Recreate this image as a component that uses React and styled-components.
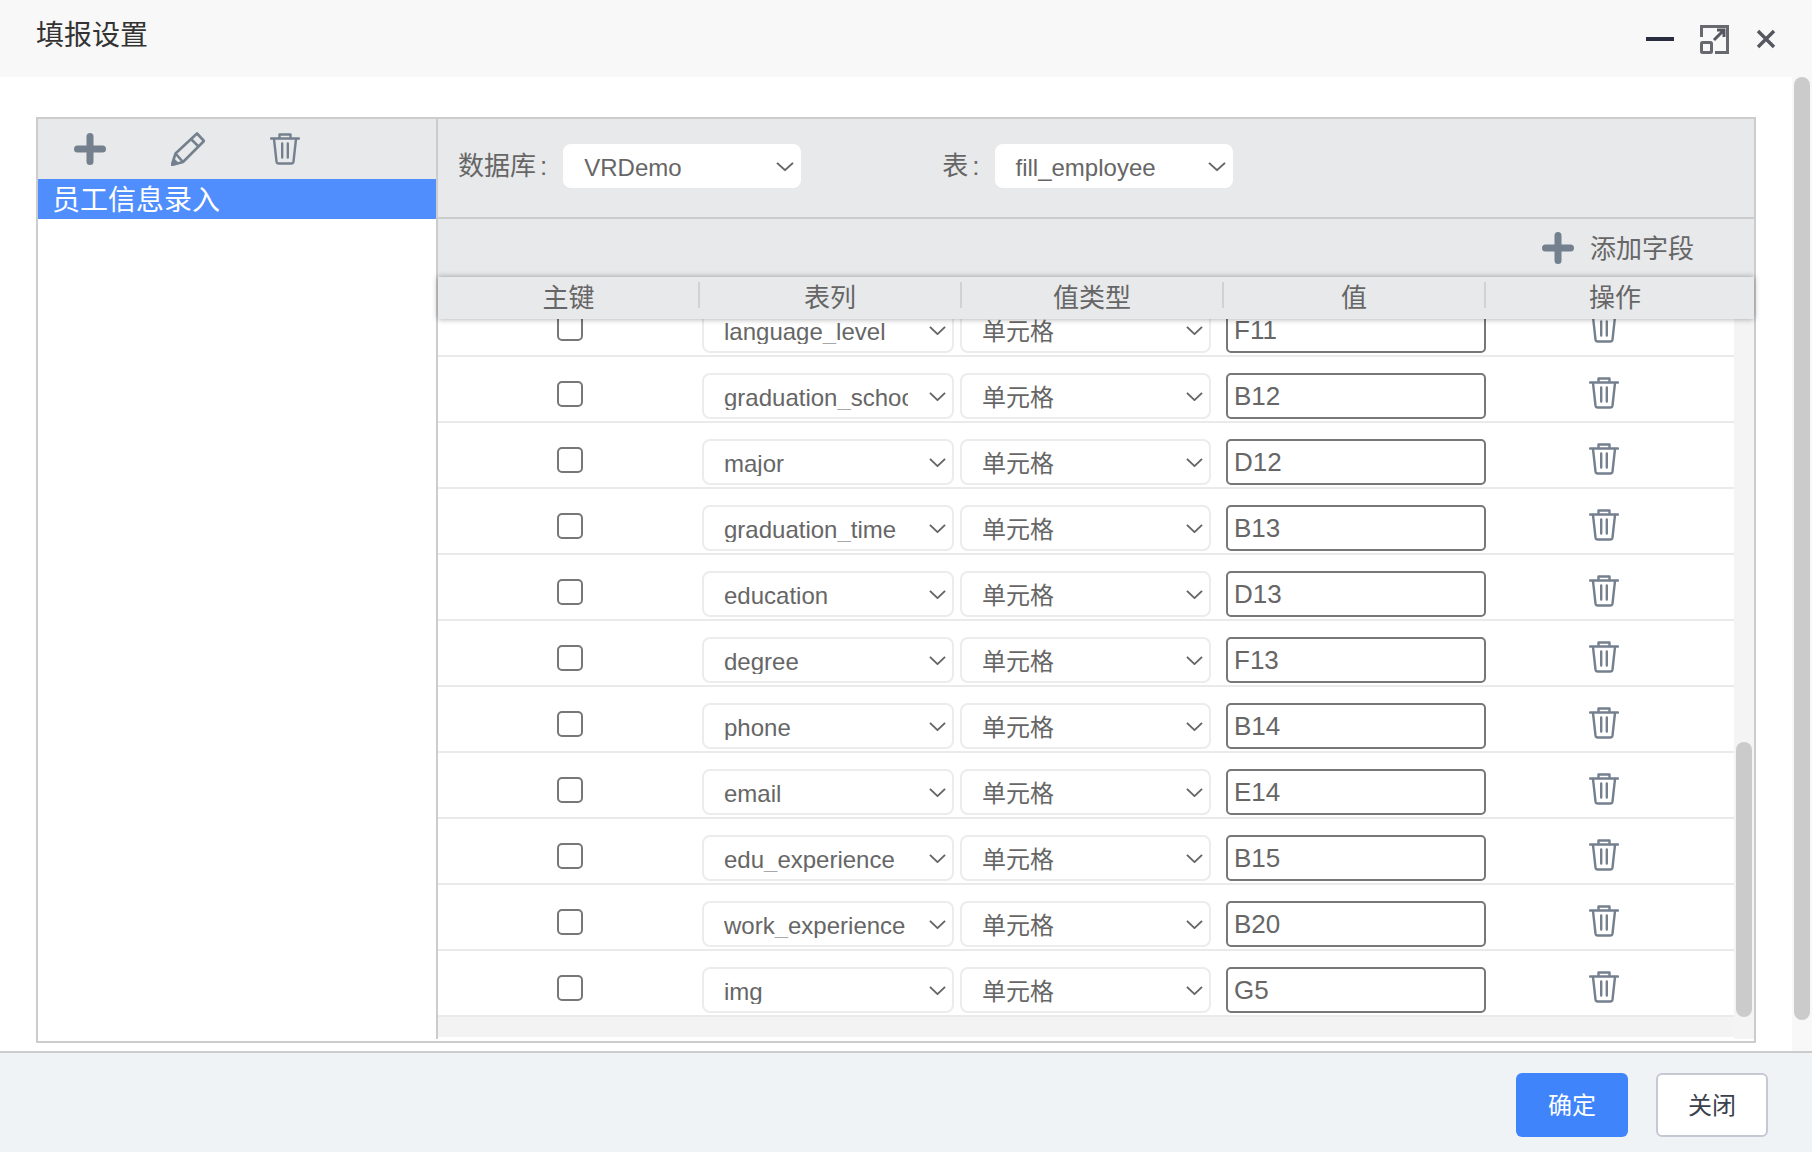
import React from "react";
import styled, { createGlobalStyle } from "styled-components";

const GlobalStyle = createGlobalStyle`
  html, body {
    margin: 0;
    padding: 0;
    background: #fff;
    overflow: hidden;
    font-family: "Liberation Sans", "Noto Sans CJK SC", sans-serif;
  }
  * { box-sizing: border-box; }
`;

const Dialog = styled.div`
  display: flex;
  flex-direction: column;
  width: 1812px;
  height: 1152px;
  background: #fff;
`;

const TitleBar = styled.div`
  display: flex;
  flex: 0 0 77px;
  align-items: center;
  justify-content: space-between;
  padding: 0 36px;
  background: #f8f8f8;
`;

const Title = styled.div`
  margin-top: -5px;
  font-size: 28px;
  line-height: 36px;
  color: #333;
`;

const WindowControls = styled.div`
  display: flex;
  align-items: center;
  gap: 26px;
`;

const Content = styled.div`
  display: flex;
  flex: 1;
  min-height: 0;
`;

const Main = styled.div`
  flex: 1;
  min-width: 0;
  padding: 40px 36px 8px;
`;

const Frame = styled.div`
  display: flex;
  height: 100%;
  padding-bottom: 2px;
  border: 2px solid #ccc;
`;

const LeftPanel = styled.div`
  flex: 0 0 400px;
  border-right: 2px solid #ccc;
`;

const LeftToolbar = styled.div`
  display: flex;
  align-items: center;
  gap: 65px;
  height: 60px;
  padding-left: 36px;
  background: #e8e9eb;
  color: #74808e;
`;

const ListItem = styled.div`
  height: 40px;
  padding-left: 14px;
  font-size: 28px;
  line-height: 44px;
  color: #fff;
  background: #4f8efc;
`;

const RightPanel = styled.div`
  display: flex;
  flex: 1;
  flex-direction: column;
  min-width: 0;
`;

const SourceBar = styled.div`
  display: flex;
  flex: 0 0 100px;
  align-items: flex-start;
  padding: 25px 0 0 20px;
  background: #e8e9eb;
  border-bottom: 2px solid #ccc;
`;

const SourceLabel = styled.div`
  margin-left: ${(p) => p.$offset || 0}px;
  font-size: 26px;
  line-height: 44px;
  color: #666;
`;

const Colon = styled.span`
  margin: 0 ${(p) => p.$after}px 0 4px;
`;

const SourceSelect = styled.div`
  display: flex;
  align-items: center;
  justify-content: space-between;
  width: 238px;
  height: 44px;
  padding: 0 7px 0 21px;
  font-size: 24px;
  color: #666;
  background: #fff;
  border-radius: 8px;
`;

const SourceValue = styled.span`
  margin-top: 4px;
`;

const SourceChevron = styled.span`
  display: flex;
  color: #666;
`;

const AddRow = styled.div`
  display: flex;
  flex: 0 0 58px;
  align-items: center;
  justify-content: flex-end;
  gap: 16px;
  padding-right: 60px;
  font-size: 26px;
  color: #666;
  background: #e8e9eb;
`;

const AddIcon = styled.span`
  display: flex;
  color: #74808e;
`;

const AddText = styled.span`
  margin-top: -4px;
`;

const TableHead = styled.div`
  position: relative;
  z-index: 1;
  display: grid;
  flex: 0 0 40px;
  grid-template-columns: 261px 262px 262px 262px 1fr;
  background: #e8e9eb;
  box-shadow: 0 0 6px rgba(0, 0, 0, 0.36);
`;

const HeadCell = styled.div`
  position: relative;
  font-size: 26px;
  line-height: 42px;
  text-align: center;
  color: #666;

  &:not(:last-child)::after {
    content: "";
    position: absolute;
    top: 5px;
    right: -1px;
    width: 2px;
    height: 26px;
    background: #d2d2d2;
  }

  &:last-child {
    padding-right: 9px;
  }
`;

const TableBody = styled.div`
  display: flex;
  flex: 1;
  min-height: 0;
`;

const RowsArea = styled.div`
  display: flex;
  flex: 1;
  flex-direction: column;
  justify-content: flex-end;
  min-width: 0;
  padding-bottom: 2px;
  overflow: hidden;
`;

const Row = styled.div`
  display: flex;
  flex: 0 0 66px;
  align-items: flex-start;
  padding-top: 16px;
  border-bottom: 2px solid #eaeaea;
`;

const BottomStrip = styled.div`
  flex: 0 0 20px;
  background: #f3f3f3;
`;

const CheckCell = styled.div`
  display: flex;
  flex: 0 0 264px;
  justify-content: center;
  padding-top: 8px;
`;

const CheckBox = styled.input.attrs({ type: "checkbox" })`
  width: 26px;
  height: 26px;
  margin: 0;
  appearance: none;
  background: #fff;
  border: 2px solid #777;
  border-radius: 5px;
`;

const CellSelect = styled.div`
  display: flex;
  flex: 0 0 ${(p) => p.$width}px;
  align-items: flex-start;
  justify-content: space-between;
  height: 46px;
  margin-left: ${(p) => p.$gap || 0}px;
  padding: 10px 6px 0 20px;
  background: #fff;
  border: 2px solid #ececec;
  border-radius: 8px;
`;

const SelectValue = styled.div`
  width: 184px;
  height: 25px;
  overflow: hidden;
  font-size: 24px;
  line-height: 26px;
  white-space: nowrap;
  color: #666;
`;

const ChevronSlot = styled.span`
  display: flex;
  margin-top: 7px;
  color: #666;
`;

const ValueBox = styled.div`
  flex: 0 0 260px;
  height: 46px;
  margin-left: 15px;
  padding-left: 6px;
  font-size: 26px;
  line-height: 42px;
  color: #666;
  background: #fff;
  border: 2px solid #777;
  border-radius: 5px;
`;

const TrashCell = styled.div`
  display: flex;
  flex: 1;
  justify-content: center;
  padding: 4px 13px 0 0;
  color: #74808e;
`;

const ScrollTrack = styled.div`
  display: flex;
  flex: 0 0 20px;
  flex-direction: column;
  justify-content: flex-end;
  padding: 0 2px 22px;
  background: ${(p) => p.$color};
`;

const ScrollThumb = styled.div`
  flex: 0 0 ${(p) => p.$height}px;
  background: #cbcbcb;
  border-radius: 8px;
`;

const PageTrack = styled(ScrollTrack)`
  justify-content: flex-start;
  padding: 0 2px;
`;

const Footer = styled.div`
  display: flex;
  flex: 0 0 101px;
  align-items: flex-start;
  justify-content: flex-end;
  gap: 28px;
  padding: 20px 44px 0 0;
  background: #eff3f6;
  border-top: 2px solid #ccc;
`;

const Button = styled.button`
  width: 112px;
  height: 64px;
  padding: 0 0 4px;
  font-family: inherit;
  font-size: 24px;
  color: ${(p) => (p.$primary ? "#fff" : "#3a404c")};
  background: ${(p) => (p.$primary ? "#3f84fb" : "#fff")};
  border: ${(p) => (p.$primary ? "none" : "2px solid #c4c9d3")};
  border-radius: 6px;
`;

const PlusIcon = () => (
  <svg width="32" height="32" viewBox="0 0 32 32" fill="none" stroke="currentColor" strokeWidth="7" strokeLinecap="round">
    <path d="M16 3.5v25M3.5 16h25" />
  </svg>
);

const PencilIcon = () => (
  <svg width="34" height="34" viewBox="0 0 34 34" fill="none" stroke="currentColor" strokeWidth="2.6" strokeLinejoin="round">
    <path d="M.8 33L4.500 21.500 26 1.500 33 9 12 30 .8 33z" />
    <path d="M4.500 21.500l7.500 8.500M20 7l7.500 7.500" />
    <path d="M.8 33l2-7 5 5z" fill="currentColor" stroke="none" />
  </svg>
);

const TrashIcon = () => (
  <svg width="30" height="32" viewBox="0 0 30 32" fill="none" stroke="currentColor" strokeWidth="2.4" strokeLinecap="round" strokeLinejoin="round">
    <path d="M1 5.500h28" />
    <path d="M9.500 5V1.500h11V5" />
    <path d="M4 6l2.500 22.500q.3 2 2.300 2h12.400q2 0 2.300-2L26 6" />
    <path d="M12.200 10.500v14M17.800 10.500v14" />
  </svg>
);

const MinimizeIcon = () => (
  <svg width="28" height="4" viewBox="0 0 28 4">
    <rect width="28" height="4" fill="#2a2d3f" />
  </svg>
);

const MaximizeIcon = () => (
  <svg width="30" height="30" viewBox="1 0 30 30" fill="none" stroke="#68686f" strokeWidth="3">
    <path d="M2.500 13V2.500h26v26H16" />
    <rect x="2.500" y="18.500" width="10" height="10" rx="1" />
    <path d="M15 16L25 6M18 6h7v7" stroke="#55565f" />
  </svg>
);

const CloseIcon = () => (
  <svg width="20" height="20" viewBox="0 0 20 20" fill="none" stroke="#55565f" strokeWidth="3.400">
    <path d="M2 2l16 16M18 2L2 18" />
  </svg>
);

const Chevron = ({ width = 17, height = 9 }) => (
  <svg width={width} height={height} viewBox="0 0 18 10" preserveAspectRatio="none" fill="none" stroke="currentColor" strokeWidth="2">
    <path d="M1 1l8 8 8-8" />
  </svg>
);

const columns = ["主键", "表列", "值类型", "值", "操作"];

const fields = [
  ["language_level", "F11"],
  ["graduation_school", "B12"],
  ["major", "D12"],
  ["graduation_time", "B13"],
  ["education", "D13"],
  ["degree", "F13"],
  ["phone", "B14"],
  ["email", "E14"],
  ["edu_experience", "B15"],
  ["work_experience", "B20"],
  ["img", "G5"],
];

export default function App() {
  return (
    <Dialog>
      <GlobalStyle />
      <TitleBar>
        <Title>填报设置</Title>
        <WindowControls>
          <MinimizeIcon />
          <MaximizeIcon />
          <CloseIcon />
        </WindowControls>
      </TitleBar>
      <Content>
        <Main>
          <Frame>
            <LeftPanel>
              <LeftToolbar>
                <PlusIcon />
                <PencilIcon />
                <TrashIcon />
              </LeftToolbar>
              <ListItem>员工信息录入</ListItem>
            </LeftPanel>
            <RightPanel>
              <SourceBar>
                <SourceLabel>
                  数据库<Colon $after={16}>:</Colon>
                </SourceLabel>
                <SourceSelect>
                  <SourceValue>VRDemo</SourceValue>
                  <SourceChevron>
                    <Chevron width={18} />
                  </SourceChevron>
                </SourceSelect>
                <SourceLabel $offset={141}>
                  表<Colon $after={15}>:</Colon>
                </SourceLabel>
                <SourceSelect>
                  <SourceValue>fill_employee</SourceValue>
                  <SourceChevron>
                    <Chevron width={18} />
                  </SourceChevron>
                </SourceSelect>
              </SourceBar>
              <AddRow>
                <AddIcon>
                  <PlusIcon />
                </AddIcon>
                <AddText>添加字段</AddText>
              </AddRow>
              <TableHead>
                {columns.map((name) => (
                  <HeadCell key={name}>{name}</HeadCell>
                ))}
              </TableHead>
              <TableBody>
                <RowsArea>
                  {fields.map(([name, cell]) => (
                    <Row key={name}>
                      <CheckCell>
                        <CheckBox readOnly />
                      </CheckCell>
                      <CellSelect $width={252}>
                        <SelectValue>{name}</SelectValue>
                        <ChevronSlot>
                          <Chevron />
                        </ChevronSlot>
                      </CellSelect>
                      <CellSelect $width={251} $gap={6}>
                        <SelectValue>单元格</SelectValue>
                        <ChevronSlot>
                          <Chevron />
                        </ChevronSlot>
                      </CellSelect>
                      <ValueBox>{cell}</ValueBox>
                      <TrashCell>
                        <TrashIcon />
                      </TrashCell>
                    </Row>
                  ))}
                  <BottomStrip />
                </RowsArea>
                <ScrollTrack $color="#f4f4f4">
                  <ScrollThumb $height={275} />
                </ScrollTrack>
              </TableBody>
            </RightPanel>
          </Frame>
        </Main>
        <PageTrack $color="#f8f8f8">
          <ScrollThumb $height={943} />
        </PageTrack>
      </Content>
      <Footer>
        <Button $primary>确定</Button>
        <Button>关闭</Button>
      </Footer>
    </Dialog>
  );
}
